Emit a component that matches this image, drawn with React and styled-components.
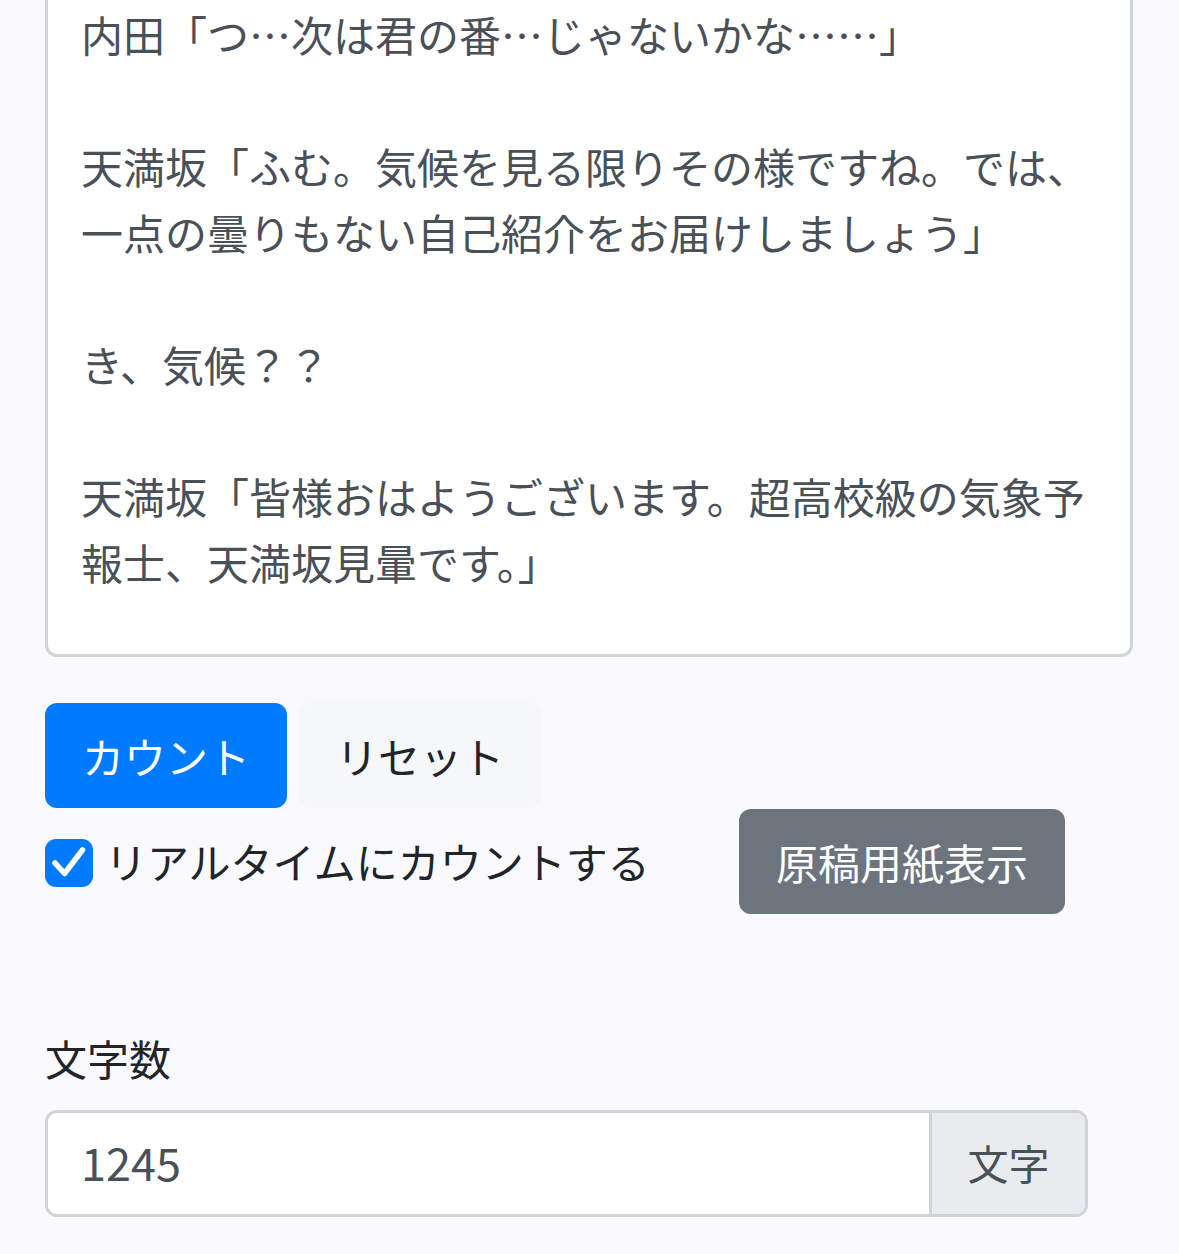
import React from 'react';
import styled, { createGlobalStyle } from 'styled-components';

const GlobalStyle = createGlobalStyle`
  html, body {
    margin: 0;
    padding: 0;
    background: #f9f9fe;
  }
  body {
    font-family: "Noto Sans CJK JP", "Noto Sans", sans-serif;
    color: #212529;
  }
`;

const Container = styled.div`
  width: 1179px;
  box-sizing: border-box;
  padding: 0 46px 0 45px;
`;

const TextBox = styled.textarea`
  display: block;
  width: 100%;
  height: 657px;
  box-sizing: border-box;
  margin: 0;
  padding: 1px 32px 0 33px;
  border: 3px solid #ced4da;
  border-top: none;
  border-radius: 0 0 12px 12px;
  background: #fff;
  color: #495057;
  font-family: "Noto Sans CJK JP", sans-serif;
  font-size: 42px;
  line-height: 66px;
  resize: none;
  overflow: hidden;
  white-space: pre;
  outline: none;
`;

const ButtonRow = styled.div`
  display: flex;
  gap: 12px;
  margin-top: 46px;
`;

const variants = {
  primary: { bg: '#007bff', fg: '#fff' },
  light: { bg: '#f6f7f9', fg: '#212529' },
  secondary: { bg: '#6c757d', fg: '#fff' },
};

const Button = styled.button`
  display: flex;
  align-items: center;
  justify-content: center;
  width: ${p => p.$width}px;
  height: 105px;
  padding: 0;
  border: none;
  border-radius: 12px;
  background: ${p => variants[p.$variant].bg};
  color: ${p => variants[p.$variant].fg};
  font-family: "Noto Sans CJK JP", sans-serif;
  font-size: 42px;
  box-sizing: border-box;
`;

const OptionRow = styled.div`
  display: grid;
  grid-template-columns: 694px auto;
  align-items: center;
  margin-top: 1px;
`;

const CheckLabel = styled.label`
  display: flex;
  align-items: center;
  gap: 12px;
  font-size: 42px;
  color: #212529;
  margin-bottom: 2px;
`;

const CheckBox = styled.span`
  display: flex;
  width: 48px;
  height: 48px;
  border-radius: 11px;
  background: #007bff;
  flex-shrink: 0;
  margin-top: 4px;
`;

const CountLabel = styled.div`
  margin-top: 112px;
  font-size: 42px;
  line-height: 63px;
  color: #212529;
`;

const InputGroup = styled.div`
  display: flex;
  width: 1043px;
  height: 107px;
  margin-top: 21px;
  box-sizing: border-box;
  border: 3px solid #ced4da;
  border-radius: 12px;
  overflow: hidden;
`;

const CountInput = styled.input`
  flex: 1;
  min-width: 0;
  border: none;
  padding: 0 0 4px 33px;
  background: #fff;
  color: #495057;
  font-family: "Noto Sans CJK JP", sans-serif;
  font-size: 45px;
  outline: none;
`;

const Addon = styled.span`
  display: flex;
  align-items: center;
  justify-content: center;
  width: 153px;
  padding-bottom: 3px;
  border-left: 3px solid #ced4da;
  background: #e9ecef;
  color: #495057;
  font-size: 41px;
`;

const text = [
  '内田「つ…次は君の番…じゃないかな……」',
  '',
  '天満坂「ふむ。気候を見る限りその様ですね。では、',
  '一点の曇りもない自己紹介をお届けしましょう」',
  '',
  'き、気候？？',
  '',
  '天満坂「皆様おはようございます。超高校級の気象予',
  '報士、天満坂見暈です。」',
].join('\n');

export default function App() {
  return (
    <Container>
      <GlobalStyle />
      <TextBox readOnly wrap="off" defaultValue={text} />
      <ButtonRow>
        <Button $variant="primary" $width={242}>カウント</Button>
        <Button $variant="light" $width={242}>リセット</Button>
      </ButtonRow>
      <OptionRow>
        <CheckLabel>
          <CheckBox>
            <svg width="48" height="48" viewBox="0 0 48 48">
              <path d="M10 24 L19.5 34.5 L37.5 11" fill="none" stroke="#fff" strokeWidth="5.5" strokeLinecap="round" strokeLinejoin="round" />
            </svg>
          </CheckBox>
          リアルタイムにカウントする
        </CheckLabel>
        <div>
          <Button $variant="secondary" $width={326}>原稿用紙表示</Button>
        </div>
      </OptionRow>
      <CountLabel>文字数</CountLabel>
      <InputGroup>
        <CountInput readOnly value="1245" />
        <Addon>文字</Addon>
      </InputGroup>
    </Container>
  );
}
